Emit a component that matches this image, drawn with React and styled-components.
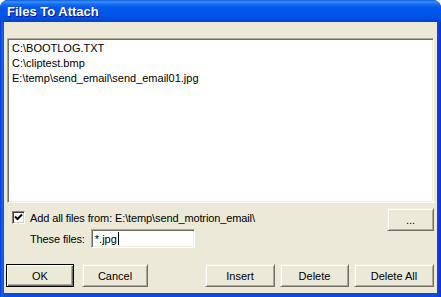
import React from "react";
import styled, { createGlobalStyle } from "styled-components";

const files = [
  "C:\\BOOTLOG.TXT",
  "C:\\cliptest.bmp",
  "E:\\temp\\send_email\\send_email01.jpg",
];

export default function App() {
  return (
    <>
      <GlobalStyle />
      <Window>
        <TitleBar>Files To Attach</TitleBar>
        <Client>
          <ListBox>
            {files.map((f) => (
              <ListItem key={f}>{f}</ListItem>
            ))}
          </ListBox>

          <Options>
            <OptionFields>
              <CheckRow>
                <CheckBox>
                  <svg width="9" height="9" viewBox="0 0 9 9">
                    <path d="M1 3.5 L3.5 6 L8 1.5" fill="none" stroke="#000" strokeWidth="2" />
                  </svg>
                </CheckBox>
                <Label>Add all files from: E:\temp\send_motrion_email\</Label>
              </CheckRow>
              <FilterRow>
                <Label>These files:</Label>
                <TextInput>
                  *.jpg
                  <Caret />
                </TextInput>
              </FilterRow>
            </OptionFields>
            <Button $w={47}>...</Button>
          </Options>

          <ButtonRow>
            <Button $w={68} $default>OK</Button>
            <Button $w={66}>Cancel</Button>
            <Spacer />
            <Button $w={70}>Insert</Button>
            <Button $w={69}>Delete</Button>
            <Button $w={80}>Delete All</Button>
          </ButtonRow>
        </Client>
      </Window>
    </>
  );
}

const GlobalStyle = createGlobalStyle`
  html, body {
    margin: 0;
    padding: 0;
    background: #ffffff;
  }
  body {
    font-family: "Liberation Sans", Arial, sans-serif;
    font-size: 11px;
    color: #000;
  }
`;

const Window = styled.div`
  width: 441px;
  height: 297px;
  display: flex;
  flex-direction: column;
  background: linear-gradient(to right, #0831d9 0px, #166aee 2px, #0a4be0 4px, #0a4be0 437px, #0831d9 441px);
  border-radius: 8px 8px 0 0;
  overflow: hidden;
`;

const TitleBar = styled.div`
  height: 22px;
  flex: none;
  display: flex;
  align-items: center;
  padding: 1px 0 0 7px;
  box-sizing: border-box;
  background: linear-gradient(
    to bottom,
    #0a5fdb 0%,
    #3d8ff7 9%,
    #1a6df2 18%,
    #0058ee 35%,
    #0055e8 65%,
    #004ede 85%,
    #0044d0 100%
  );
  color: #ffffff;
  font-family: "Liberation Sans", Arial, sans-serif;
  font-weight: bold;
  font-size: 13px;
  text-shadow: 1px 1px #0f1089;
`;

const Client = styled.div`
  flex: 1;
  margin: 0 4px 4px;
  background: #ece9d8;
  display: flex;
  flex-direction: column;
  padding: 16px 3px 6px 3px;
  box-sizing: border-box;
  min-height: 0;
`;

const ListBox = styled.div`
  height: 165px;
  flex: none;
  background: #ffffff;
  box-sizing: border-box;
  border-top: 1px solid #aca899;
  border-left: 1px solid #aca899;
  border-right: 1px solid #ffffff;
  border-bottom: 1px solid #ffffff;
  box-shadow: inset 1px 1px #716f64, inset -1px -1px #f1efe2;
  padding: 2px 4px;
`;

const ListItem = styled.div`
  line-height: 15px;
  white-space: nowrap;
`;

const Options = styled.div`
  display: flex;
  align-items: flex-start;
  margin-top: 5px;
`;

const OptionFields = styled.div`
  flex: 1;
  display: flex;
  flex-direction: column;
  padding-top: 3px;
`;

const CheckRow = styled.div`
  display: flex;
  align-items: center;
  height: 13px;
  padding-left: 5px;
  gap: 5px;
`;

const CheckBox = styled.div`
  width: 13px;
  height: 13px;
  box-sizing: border-box;
  background: #ffffff;
  border-top: 1px solid #808080;
  border-left: 1px solid #808080;
  border-right: 1px solid #ffffff;
  border-bottom: 1px solid #ffffff;
  box-shadow: inset 1px 1px #404040, inset -1px -1px #d4d0c8;
  display: flex;
  align-items: center;
  justify-content: center;
`;

const Label = styled.span`
  white-space: nowrap;
  letter-spacing: -0.12px;
`;

const FilterRow = styled.div`
  display: flex;
  align-items: center;
  margin-top: 5px;
  padding-left: 23px;
  gap: 6px;
`;

const TextInput = styled.div`
  width: 104px;
  height: 19px;
  box-sizing: border-box;
  background: #ffffff;
  border-top: 1px solid #aca899;
  border-left: 1px solid #aca899;
  border-right: 1px solid #ffffff;
  border-bottom: 1px solid #ffffff;
  box-shadow: inset 1px 1px #716f64, inset -1px -1px #f1efe2;
  padding: 0 3px;
  display: flex;
  align-items: center;
`;

const Caret = styled.span`
  width: 1px;
  height: 13px;
  background: #000;
  margin-left: 1px;
`;

const Button = styled.div`
  width: ${(p) => p.$w}px;
  height: 23px;
  flex: none;
  box-sizing: border-box;
  display: flex;
  align-items: center;
  justify-content: center;
  background: #ece9d8;
  border: 1px solid ${(p) => (p.$default ? "#000000" : "transparent")};
  border-top-color: ${(p) => (p.$default ? "#000000" : "#f1efe2")};
  border-left-color: ${(p) => (p.$default ? "#000000" : "#f1efe2")};
  border-right-color: ${(p) => (p.$default ? "#000000" : "#716f64")};
  border-bottom-color: ${(p) => (p.$default ? "#000000" : "#716f64")};
  box-shadow: ${(p) =>
    p.$default
      ? "inset 1px 1px #ffffff, inset -1px -1px #716f64, inset -2px -2px #aca899"
      : "inset 1px 1px #ffffff, inset -1px -1px #aca899"};
  margin-left: ${(p) => (p.$default ? "-1px" : "0")};
`;

const ButtonRow = styled.div`
  margin-top: auto;
  display: flex;
  gap: 5px;
  & > :nth-child(2) {
    margin-left: 3px;
  }
`;

const Spacer = styled.div`
  flex: 1;
`;
